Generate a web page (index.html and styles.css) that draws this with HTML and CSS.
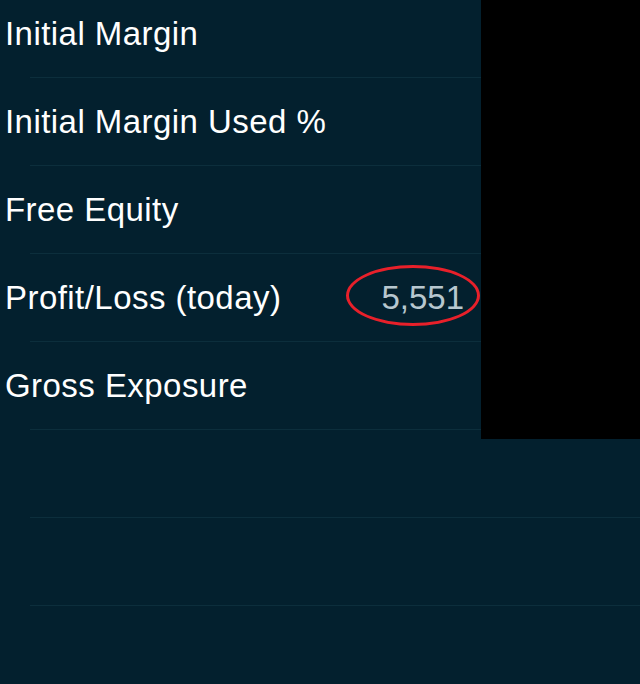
FILE: index.html
```html
<!DOCTYPE html>
<html>
<head>
<meta charset="utf-8">
<link rel="stylesheet" href="styles.css">
</head>
<body>
<div class="screen">
  <ul class="list">
    <li class="row"><span class="label">Initial Margin</span><span class="value"></span></li>
    <li class="row"><span class="label">Initial Margin Used %</span><span class="value"></span></li>
    <li class="row"><span class="label">Free Equity</span><span class="value"></span></li>
    <li class="row"><span class="label">Profit/Loss (today)</span><span class="value">5,551<span class="ring"></span></span></li>
    <li class="row"><span class="label">Gross Exposure</span><span class="value"></span></li>
    <li class="row"><span class="label"></span><span class="value"></span></li>
    <li class="row"><span class="label"></span><span class="value"></span></li>
    <li class="row last"><span class="label"></span><span class="value"></span></li>
  </ul>
  <div class="redact"></div>
</div>
</body>
</html>
```

FILE: styles.css
```css
html, body {
  margin: 0;
  padding: 0;
  background: #03202e;
}
.screen {
  position: relative;
  width: 640px;
  height: 684px;
  overflow: hidden;
  background: #03202e;
  font-family: "Liberation Sans", Arial, sans-serif;
}
.list {
  list-style: none;
  margin: -10px 0 0 0;
  padding: 0;
}
.row {
  position: relative;
  display: flex;
  align-items: center;
  height: 88px;
  line-height: 88px;
  padding-left: 5px;
  padding-right: 176px;
  box-sizing: border-box;
  font-size: 33px;
}
.row::after {
  content: "";
  position: absolute;
  left: 30px;
  right: 0;
  bottom: 0;
  height: 1px;
  background: #0c2e3c;
}
.row.last::after {
  display: none;
}
.label {
  flex: 1;
  color: #ffffff;
  white-space: nowrap;
  letter-spacing: 0.45px;
}
.value {
  position: relative;
  color: #b7c7cf;
}
.ring {
  position: absolute;
  left: -35px;
  top: 11px;
  width: 128px;
  height: 55px;
  border: 3px solid #e8202a;
  border-radius: 50%;
}
.redact {
  position: absolute;
  left: 481px;
  top: 0;
  width: 159px;
  height: 439px;
  background: #000000;
}
```
